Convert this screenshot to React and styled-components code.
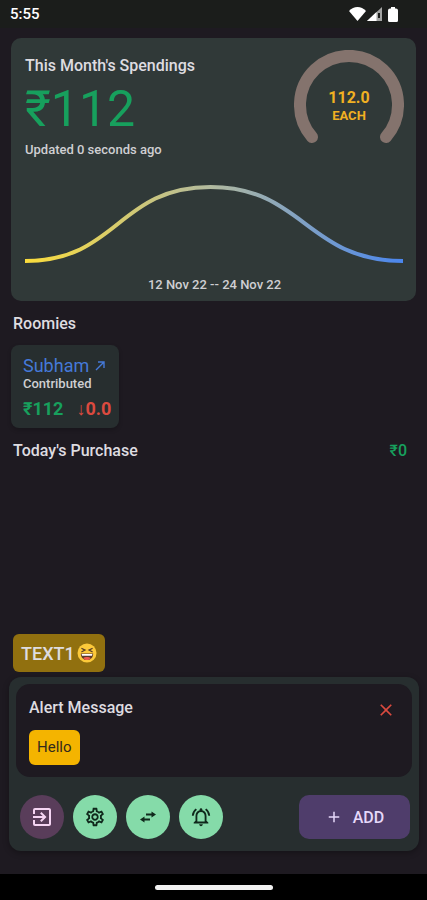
import React, {Component} from 'react';
import styled, {createGlobalStyle} from 'styled-components';
import {
  MdAdd,
  MdClose,
  MdExitToApp,
  MdOutlineNotificationsActive,
  MdOutlineSettings
} from 'react-icons/md';

const GlobalStyle = createGlobalStyle`
  * {
    box-sizing: border-box;
  }

  body {
    margin: 0;
    background: #1e1a21;
    color: #dedce0;
    font-family: Roboto, "Noto Sans", sans-serif;
  }

  h1, h2, p {
    margin: 0;
  }

  button {
    border: 0;
    padding: 0;
    font-family: inherit;
    cursor: pointer;
  }
`;

const Screen = styled.div`
  display: flex;
  flex-direction: column;
  min-height: 100vh;
`;

const StatusBar = styled.header`
  display: flex;
  align-items: center;
  justify-content: space-between;
  height: 28px;
  padding: 0 29px 0 10px;
  background: #1b1d1b;
  color: #fff;
  font-size: 15px;
  font-weight: 500;
`;

const StatusIcons = styled.div`
  display: flex;
  align-items: center;
  gap: 1px;

  svg:last-child {
    margin-left: 5px;
  }
`;

const Content = styled.main`
  display: flex;
  flex: 1;
  flex-direction: column;
  padding: 10px 11px 0;
`;

const SpendingCard = styled.section`
  padding: 12px 12px 8px 14px;
  border-radius: 10px;
  background: #303938;
`;

const CardTop = styled.div`
  display: flex;
  justify-content: space-between;
`;

const Heading = styled.h2`
  font-size: 16px;
  font-weight: 500;
  line-height: 20px;
`;

const Summary = styled.div`
  padding-top: 6px;
`;

const Total = styled.p`
  color: #17a05d;
  font-size: 50px;
  line-height: 66px;
`;

const Caption = styled.p`
  color: #cfcfd2;
  font-size: 13px;
  font-weight: 500;
  line-height: 16px;
  text-align: ${props => props.$center ? 'center' : 'left'};
`;

const Gauge = styled.div`
  display: grid;
  width: 110px;
  height: 110px;

  > * {
    grid-area: 1 / 1;
  }
`;

const GaugeText = styled.div`
  align-self: center;
  padding-top: 4px;
  color: #f0b022;
  text-align: center;
  font-weight: 700;
  line-height: 18px;
`;

const GaugeLine = styled.div`
  font-size: ${props => props.$small ? '13px' : '16px'};
`;

const Chart = styled.svg`
  display: block;
  width: 100%;
  height: 100px;
  margin: 10px 0 7px;
`;

const SectionRow = styled.div`
  display: flex;
  justify-content: space-between;
  padding: 13px 9px 11px 2px;
`;

const Amount = styled.span`
  color: ${props => props.$owed ? '#db4a3f' : '#17a05d'};
  font-size: ${props => props.$bold ? '18px' : '16px'};
  font-weight: ${props => props.$bold ? 700 : 500};
  line-height: 20px;
`;

const RoomieCard = styled.section`
  align-self: flex-start;
  padding: 11px 8px 9px 12px;
  border-radius: 8px;
  background: #272e2f;
  box-shadow: 0 2px 4px rgba(0, 0, 0, 0.2);
`;

const RoomieLink = styled.a`
  display: flex;
  align-items: center;
  gap: 6px;
  color: #4579d8;
  font-size: 18px;
  line-height: 20px;
  text-decoration: none;
`;

const Balance = styled.div`
  display: flex;
  gap: 13px;
  padding-top: 7px;
`;

const Tag = styled.div`
  display: flex;
  align-items: center;
  align-self: flex-start;
  gap: 2px;
  height: 38px;
  margin: auto 0 5px 2px;
  padding: 0 8px;
  border-radius: 6px;
  background: #91700f;
  font-size: 18px;
  font-weight: 500;
`;

const Dock = styled.section`
  margin: 0 8px 23px 9px;
  padding: 7px 7px 12px;
  border-radius: 12px;
  background: #272e2f;
  box-shadow: 0 2px 6px rgba(0, 0, 0, 0.3);
`;

const Alert = styled.div`
  display: flex;
  align-items: flex-start;
  justify-content: space-between;
  padding: 14px 16px 12px 13px;
  border-radius: 14px;
  background: #1e1a21;
`;

const Message = styled.p`
  width: fit-content;
  margin-top: 12px;
  padding: 0 8px;
  border-radius: 6px;
  background: #f4b400;
  color: #332a1c;
  font-size: 15px;
  line-height: 35px;
`;

const CloseButton = styled.button`
  display: flex;
  margin-top: 2px;
  background: none;
  color: #db4a3f;
`;

const Actions = styled.div`
  display: flex;
  align-items: center;
  gap: 9px;
  padding: 18px 2px 0 4px;
`;

const RoundButton = styled.button`
  display: flex;
  align-items: center;
  justify-content: center;
  width: 44px;
  height: 44px;
  border-radius: 50%;
  background: ${props => props.$leave ? '#593d5a' : '#85dba9'};
  color: ${props => props.$leave ? '#f5d5f3' : '#10291c'};
`;

const AddButton = styled.button`
  display: flex;
  align-items: center;
  justify-content: center;
  gap: 10px;
  width: 111px;
  height: 44px;
  margin-left: auto;
  border-radius: 10px;
  background: #4f3d6b;
  color: #e6d8fa;
  font-size: 16px;
  font-weight: 500;
`;

const NavBar = styled.footer`
  display: flex;
  align-items: center;
  justify-content: center;
  height: 26px;
  background: #000;
`;

const HomeHandle = styled.div`
  width: 118px;
  height: 5px;
  border-radius: 3px;
  background: #f2f2f2;
`;

const LaughIcon = () => (
  <svg width="20" height="20" viewBox="0 0 20 20" role="img" aria-label="laughing">
    <circle cx="10" cy="10" r="9.5" fill="#fcc93a"/>
    <path d="M4.4 5.2 8 7.1 4.4 9M15.6 5.2 12 7.1 15.6 9" fill="none" stroke="#5b4028" strokeWidth="1.3"/>
    <path d="M3.8 10.5h12.4c0 4.2-2.8 6.6-6.2 6.6s-6.2-2.4-6.2-6.600z" fill="#5b3a29"/>
    <path d="M4.6 10.9h10.8l-.4 1.9H5z" fill="#fff"/>
    <path d="M6.3 15.2c1-1 2.2-1.2 3.700-1.200s2.700.2 3.700 1.200c-1 1.300-2.300 1.900-3.700 1.900s-2.700-.6-3.700-1.900z" fill="#ec5a4e"/>
  </svg>
);

const TransferIcon = () => (
  <svg width="16" height="12" viewBox="0 0 16 12" fill="currentColor">
    <path d="M6 2.500h5.500V.500L16 3.500l-4.500 3v-2H6z"/>
    <path d="M10 7.500H4.500v-2L0 8.500l4.500 3v-2H10z"/>
  </svg>
);

class App extends Component {
  state = {
    showAlert: true
  };

  closeAlert = () => {
    this.setState({showAlert: false});
  };

  render() {
    return (
      <Screen>
        <GlobalStyle/>
        <StatusBar>
          <time>5:55</time>
          <StatusIcons>
            <svg width="17" height="14" viewBox="0 0 17 14" fill="#fff">
              <path d="M8.500 14 0 4C2.500 1.200 5.300 0 8.500 0S14.500 1.200 17 4z"/>
            </svg>
            <svg width="15" height="14" viewBox="0 0 15 14" fill="#fff">
              <path d="M0 14 15 0v14z" opacity=".6"/>
              <path d="M0 14 9.500 5V14z"/>
              <path d="M11 6h2v5h-2z" fill="#1b1d1b"/>
            </svg>
            <svg width="10" height="15" viewBox="0 0 10 15" fill="#fff">
              <path d="M3 0h4v1.500h1a2 2 0 0 1 2 2V13.500a1.500 1.500 0 0 1-1.500 1.500h-7A1.500 1.500 0 0 1 0 13.500V3.500a2 2 0 0 1 2-2h1z"/>
            </svg>
          </StatusIcons>
        </StatusBar>

        <Content>
          <SpendingCard>
            <CardTop>
              <Summary>
                <Heading>This Month's Spendings</Heading>
                <Total>₹112</Total>
                <Caption>Updated 0 seconds ago</Caption>
              </Summary>
              <Gauge>
                <svg width="110" height="110" viewBox="0 0 110 110">
                  <path d="M18 87A49 49 0 1 1 92 87" fill="none" stroke="#84736d" strokeWidth="12" strokeLinecap="round"/>
                </svg>
                <GaugeText>
                  <GaugeLine>112.0</GaugeLine>
                  <GaugeLine $small>EACH</GaugeLine>
                </GaugeText>
              </Gauge>
            </CardTop>
            <Chart viewBox="0 0 380 100" preserveAspectRatio="none">
              <defs>
                <linearGradient id="spending" x1="0" x2="1" y1="0" y2="0">
                  <stop offset="0" stopColor="#fbdd3c"/>
                  <stop offset="0.5" stopColor="#b0b9a0"/>
                  <stop offset="1" stopColor="#4a86ee"/>
                </linearGradient>
              </defs>
              <path
                d="M0 91C93 91 93 17 186 17S283 91 379 91"
                fill="none"
                stroke="url(#spending)"
                strokeWidth="4"
              />
            </Chart>
            <Caption $center>12 Nov 22 -- 24 Nov 22</Caption>
          </SpendingCard>

          <SectionRow>
            <Heading>Roomies</Heading>
          </SectionRow>
          <RoomieCard>
            <RoomieLink href="#subham">
              Subham
              <svg width="10" height="10" viewBox="0 0 10 10" fill="none" stroke="currentColor" strokeWidth="1.400">
                <path d="M1 9 9 1M3 1h6v6"/>
              </svg>
            </RoomieLink>
            <Caption>Contributed</Caption>
            <Balance>
              <Amount $bold>₹112</Amount>
              <Amount $bold $owed>↓0.0</Amount>
            </Balance>
          </RoomieCard>

          <SectionRow>
            <Heading>Today's Purchase</Heading>
            <Amount>₹0</Amount>
          </SectionRow>

          <Tag>TEXT1<LaughIcon/></Tag>
        </Content>

        <Dock>
          {this.state.showAlert && (
            <Alert>
              <div>
                <Heading>Alert Message</Heading>
                <Message>Hello</Message>
              </div>
              <CloseButton aria-label="Close alert" onClick={this.closeAlert}>
                <MdClose size={20}/>
              </CloseButton>
            </Alert>
          )}
          <Actions>
            <RoundButton $leave aria-label="Leave"><MdExitToApp size={24}/></RoundButton>
            <RoundButton aria-label="Settings"><MdOutlineSettings size={22}/></RoundButton>
            <RoundButton aria-label="Transfers"><TransferIcon/></RoundButton>
            <RoundButton aria-label="Notifications"><MdOutlineNotificationsActive size={22}/></RoundButton>
            <AddButton><MdAdd size={18}/>ADD</AddButton>
          </Actions>
        </Dock>

        <NavBar>
          <HomeHandle/>
        </NavBar>
      </Screen>
    );
  }
}

export default App;
